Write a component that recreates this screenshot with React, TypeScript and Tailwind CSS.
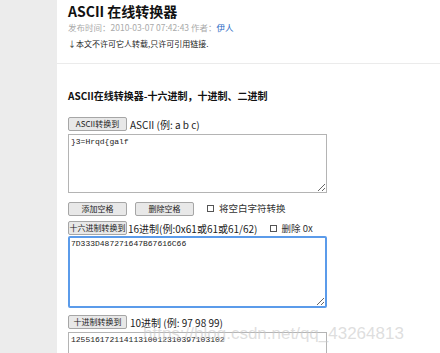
import React from "react";

const cjk = { fontFamily: '"Noto Sans CJK SC", "Noto Sans", sans-serif' };
const mono = { fontFamily: '"Liberation Mono", "Noto Sans CJK SC", monospace' };

function Btn({ label }: { label: string }) {
  return (
    <button
      className="w-[59px] h-[14px] shrink-0 rounded-[2px] border border-[#a6a6a6] bg-[#e8e8e8] text-[8px] leading-none text-[#222]"
      style={cjk}
    >
      {label}
    </button>
  );
}

function Check({ label }: { label: string }) {
  return (
    <span className="flex items-center gap-[5px] text-[9.5px] text-[#333]">
      <span className="w-[7px] h-[7px] border border-[#555] bg-white" />
      {label}
    </span>
  );
}

export default function App() {
  return (
    <div className="relative flex w-[440px] h-[353px] overflow-hidden bg-white" style={cjk}>
      <div className="w-[57px] shrink-0 bg-[#ececec]" />

      <div className="flex-1">
        <div className="pl-[11px]">
          <h1 className="pt-[3px] text-[14px] leading-[17px] font-bold text-[#111]">
            ASCII 在线转换器
          </h1>
          <p className="mt-[1px] text-[8.5px] leading-[12px] text-[#aaa]">
            发布时间：2010-03-07 07:42:43 作者：
            <span className="text-[#2a6bc4]">伊人</span>
          </p>
          <p className="mt-[5px] text-[8px] leading-[12px] text-[#222]">
            ↓本文不许可它人转载,只许可引用链接.
          </p>
        </div>

        <div className="mt-[13px] h-px bg-[#ebebeb]" />

        <div className="pl-[11px]">
          <h2 className="mt-[25px] text-[10px] leading-[14px] font-bold text-[#111]">
            ASCII在线转换器-十六进制，十进制、二进制
          </h2>

          <div className="mt-[14px] flex items-center gap-[3px] h-[14px]">
            <Btn label="ASCII转换到" />
            <span className="text-[10px] text-[#222]">ASCII (例: a b c)</span>
          </div>
          <textarea
            readOnly
            defaultValue="}3=Hrqd{galf"
            className="mt-[3px] block w-[259px] h-[59px] border border-[#b4b4b4] px-[2px] py-[1px] text-[8px] leading-[12px] text-[#222] outline-none"
            style={mono}
          />

          <div className="mt-[9px] flex items-center h-[13px]">
            <Btn label="添加空格" />
            <span className="w-[8px]" />
            <Btn label="删除空格" />
            <span className="w-[13px]" />
            <Check label="将空白字符转换" />
          </div>

          <div className="mt-[6px] flex items-center h-[14px]">
            <Btn label="十六进制转换到" />
            <span className="ml-[1px] text-[10px] text-[#222]">16进制(例:0x61或61或61/62)</span>
            <span className="w-[12px]" />
            <Check label="删除 0x" />
          </div>
          <textarea
            readOnly
            defaultValue="7D333D487271647B67616C66"
            className="mt-[1px] block w-[259px] h-[72px] rounded-[2px] border-2 border-[#5b9bea] px-[1px] py-0 text-[8px] leading-[12px] text-[#222] outline-none"
            style={mono}
          />

          <div className="mt-[7px] flex items-center gap-[3px] h-[14px]">
            <Btn label="十进制转换到" />
            <span className="text-[10px] text-[#222]">10进制 (例: 97 98 99)</span>
          </div>
          <textarea
            readOnly
            defaultValue="12551617211411310012310397103102"
            className="mt-[3px] block w-[259px] h-[40px] border border-[#b4b4b4] px-[2px] py-[1px] text-[8px] leading-[12px] text-[#222] outline-none"
            style={mono}
          />
        </div>
      </div>

      <span
        className="absolute left-[143px] top-[324px] text-[17px] leading-[20px] text-[#c8c8c8]/60 pointer-events-none"
        style={{ fontFamily: '"Liberation Sans", Arial, sans-serif' }}
      >
        https://blog.csdn.net/qq_43264813
      </span>
    </div>
  );
}
